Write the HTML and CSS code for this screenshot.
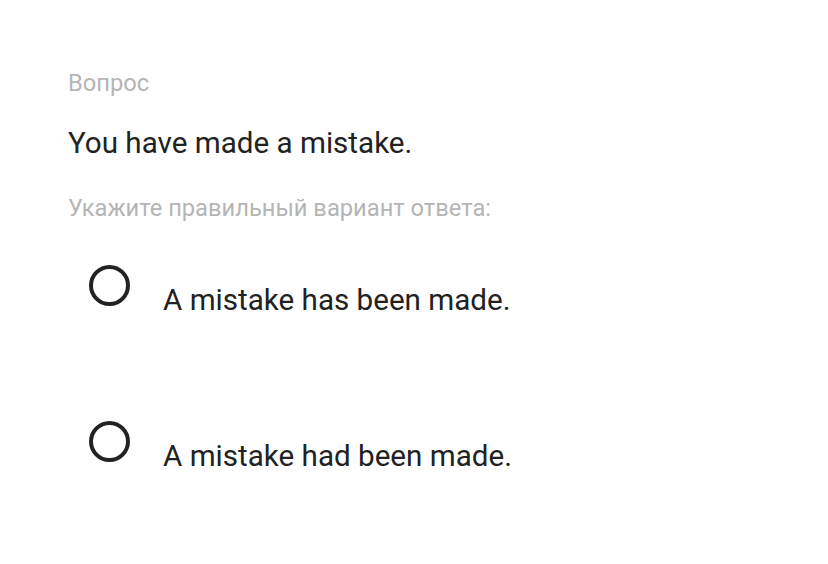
FILE: index.html
```html
<!DOCTYPE html>
<html lang="ru">

<head>
    <meta charset="UTF-8">
    <meta name="viewport" content="width=device-width, initial-scale=1.0">
    <title>Вопрос</title>
    <link rel="stylesheet" href="styles.css">
</head>

<body>
    <div class="question-card">
        <div class="caption">Вопрос</div>
        <div class="question">You have made a mistake.</div>
        <div class="hint">Укажите правильный вариант ответа:</div>

        <div class="options">
            <label class="option">
                <span class="radio"></span>
                <span class="option-text">A mistake has been made.</span>
            </label>
            <label class="option">
                <span class="radio"></span>
                <span class="option-text">A mistake had been made.</span>
            </label>
        </div>
    </div>
</body>

</html>
```

FILE: styles.css
```css
body {
    font-family: Roboto, "Noto Sans", sans-serif;
    margin: 0;
    background-color: #fff;
    color: #222;
}

.question-card {
    padding: 67px 20px 0 68px;
}

.caption {
    font-size: 23.7px;
    line-height: 32px;
    color: #b5b5b5;
}

.question {
    margin-top: 24px;
    font-size: 29.6px;
    line-height: 40px;
}

.hint {
    margin-top: 29px;
    font-size: 23.7px;
    line-height: 32px;
    color: #b5b5b5;
}

.options {
    display: flex;
    flex-direction: column;
    gap: 101px;
    margin-top: 41px;
}

.option {
    display: flex;
    align-items: flex-start;
    cursor: pointer;
}

.radio {
    width: 33px;
    height: 33px;
    margin-left: 21px;
    border: 4px solid #222;
    border-radius: 50%;
    flex-shrink: 0;
}

.option-text {
    margin-left: 33px;
    padding-top: 15px;
    font-size: 29.6px;
    line-height: 40px;
}
```
